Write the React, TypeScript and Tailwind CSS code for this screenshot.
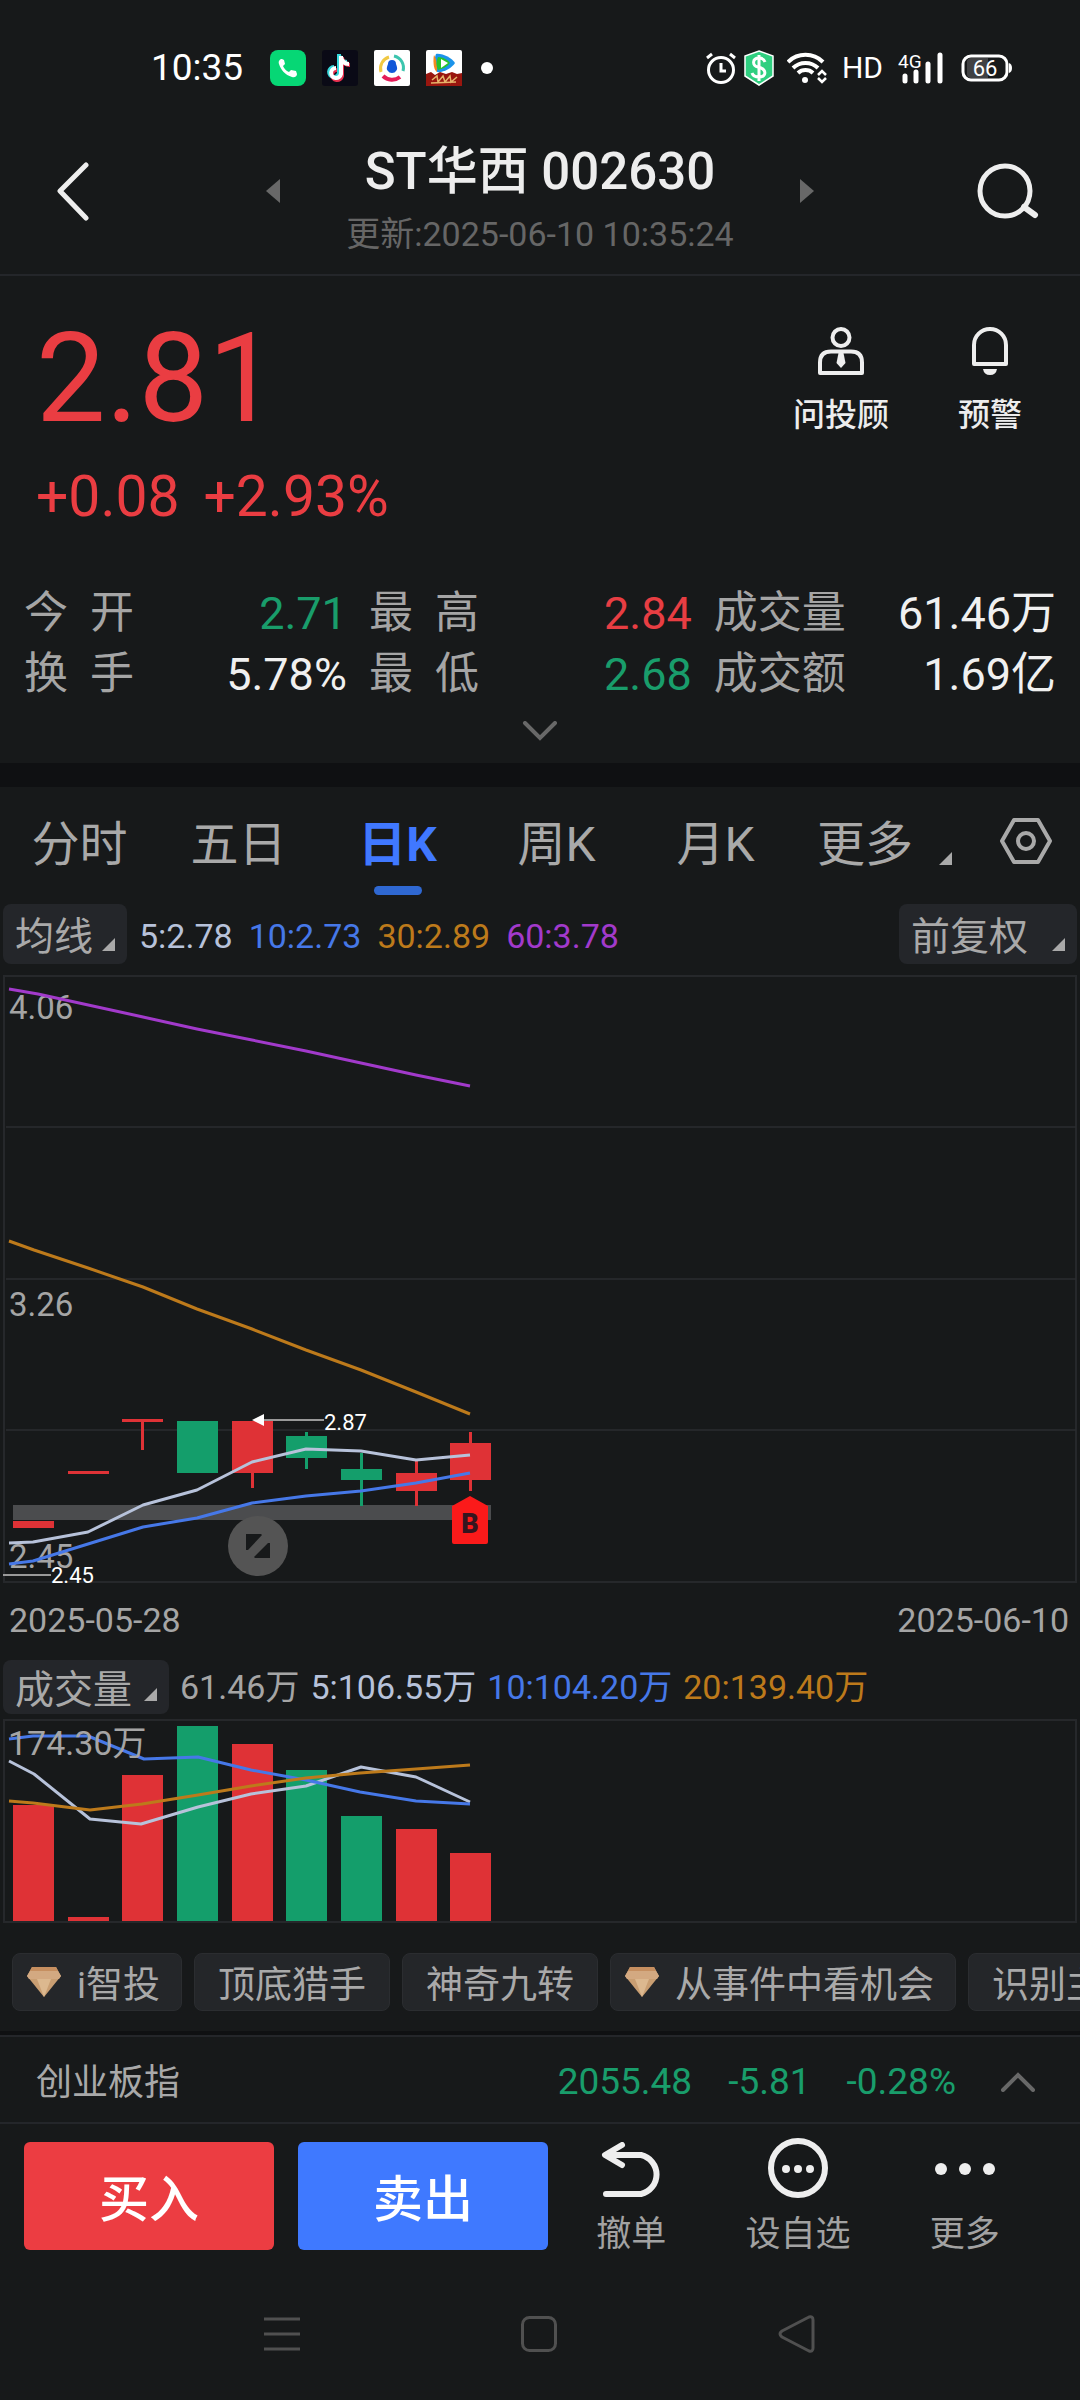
import { useState } from 'react';
import type { ReactNode } from 'react';

const UP = '#df3236';
const DOWN = '#149e6b';
const GRID = '#26282b';
const MA_WHITE = '#b7c2da';
const MA_BLUE = '#4678e8';
const MA_ORANGE = '#bd7a1b';
const MA_PURPLE = '#a23acb';

type Period = '分时' | '五日' | '日K' | '周K' | '月K';

const periods: Period[] = ['分时', '五日', '日K', '周K', '月K'];

const stats = [
  { label: '今开', value: '2.71', color: 'text-[#199d6b]' },
  { label: '最高', value: '2.84', color: 'text-[#e83e43]' },
  { label: '成交量', value: '61.46万', color: 'text-[#f0f0f0]' },
  { label: '换手', value: '5.78%', color: 'text-[#f0f0f0]' },
  { label: '最低', value: '2.68', color: 'text-[#199d6b]' },
  { label: '成交额', value: '1.69亿', color: 'text-[#f0f0f0]' },
];

const tools = [
  { label: 'i智投', vip: true },
  { label: '顶底猎手', vip: false },
  { label: '神奇九转', vip: false },
  { label: '从事件中看机会', vip: true },
  { label: '识别主力', vip: false },
];

// open/close edges and high/low of each day, in chart units
const candles = [
  { x: 33, top: 546, bottom: 553, high: 546, low: 553, up: true },
  { x: 88, top: 496, bottom: 499, high: 496, low: 499, up: true },
  { x: 142, top: 444, bottom: 447, high: 444, low: 475, up: true },
  { x: 197, top: 446, bottom: 498, high: 446, low: 498, up: false },
  { x: 252, top: 446, bottom: 498, high: 446, low: 513, up: true },
  { x: 306, top: 461, bottom: 483, high: 457, low: 494, up: false },
  { x: 361, top: 494, bottom: 505, high: 478, low: 531, up: false },
  { x: 416, top: 498, bottom: 516, high: 484, low: 531, up: true },
  { x: 470, top: 468, bottom: 505, high: 457, low: 516, up: true },
];

const volumes = [
  { x: 33, top: 86, up: true },
  { x: 88, top: 198, up: true },
  { x: 142, top: 56, up: true },
  { x: 197, top: 7, up: false },
  { x: 252, top: 25, up: true },
  { x: 306, top: 51, up: false },
  { x: 361, top: 97, up: false },
  { x: 416, top: 110, up: true },
  { x: 470, top: 134, up: true },
];

const priceLines = [
  { color: MA_PURPLE, points: '9,14 38,19 143,42 197,54 252,65 306,76 361,88 416,100 470,111' },
  { color: MA_ORANGE, points: '9,266 34,275 88,293 143,312 197,334 252,354 306,375 361,395 416,417 470,439' },
  { color: MA_WHITE, points: '9,568 33,567 88,557 143,530 197,515 252,487 306,474 361,476 416,485 470,480' },
  { color: MA_BLUE, points: '9,589 33,586 88,569 143,552 197,543 252,528 306,521 361,516 416,508 470,498' },
];

const volumeLines = [
  { color: MA_WHITE, points: '9,42 34,55 90,100 141,105 198,88 251,75 306,67 361,48 416,58 470,83' },
  { color: MA_BLUE, points: '9,20 33,17 88,17 144,40 198,38 251,51 306,61 360,73 416,82 470,85' },
  { color: MA_ORANGE, points: '9,82 33,84 90,91 142,85 198,76 251,67 306,59 360,54 416,50 470,46' },
];

function Corner() {
  return (
    <svg className="h-[13px] w-[13px] shrink-0" viewBox="0 0 13 13" aria-hidden="true">
      <path d="M13 0v13H0z" fill="#a9a9a9" />
    </svg>
  );
}

function Diamond() {
  return (
    <svg className="h-[30px] w-[34px] shrink-0" viewBox="0 0 34 30" aria-hidden="true">
      <path d="M5 0h24l5 9-17 21L0 9z" fill="#c99e72" />
      <path d="M5 0h24l2 4H3z" fill="#c68f60" />
      <path d="M3 4h28l3 5-2 3H2L0 9z" fill="#d3a981" />
      <path d="M10 12h14l-7 18z" fill="#dcb88f" />
    </svg>
  );
}

function StatusBar() {
  return (
    <div className="flex h-32 items-center justify-between pt-2 pr-[68px] pl-[151px] text-white">
      <div className="flex items-center gap-4">
        <span className="mr-[11px] text-[37px] leading-[40px]">10:35</span>
        <svg className="h-9 w-9" viewBox="0 0 36 36" aria-hidden="true">
          <rect width="36" height="36" rx="8" fill="#06d775" />
          <path d="M12 9c-2 0-4 2-3 5 2 6 6 11 13 13 3 1 5-1 5-3l-1-3-5-1-2 2c-3-1-5-4-6-6l2-2-1-4z" fill="#fff" />
        </svg>
        <svg className="h-9 w-9" viewBox="0 0 36 36" aria-hidden="true">
          <rect width="36" height="36" rx="3" fill="#0a0a16" />
          <path d="M18 5v19a5 5 0 1 1-5-6M18 6c1 5 4 7 8 7" transform="translate(-1 -1)" fill="none" stroke="#37d8dc" strokeWidth="4" />
          <path d="M18 5v19a5 5 0 1 1-5-6M18 6c1 5 4 7 8 7" transform="translate(2 2)" fill="none" stroke="#e8304f" strokeWidth="4" />
          <path d="M19 6v18a5 5 0 1 1-5-6M19 7c1 5 4 7 8 7" fill="none" stroke="#fff" strokeWidth="4" />
        </svg>
        <svg className="h-9 w-9" viewBox="0 0 36 36" aria-hidden="true">
          <rect width="36" height="36" rx="2" fill="#fff" />
          <path d="M7 22a12 12 0 0 1 8-15" fill="none" stroke="#f0c843" strokeWidth="3" />
          <path d="M20 6a12 12 0 0 1 9 15" fill="none" stroke="#3cc5ae" strokeWidth="3" />
          <path d="M9 26a13 13 0 0 0 17 1" fill="none" stroke="#e51b58" strokeWidth="4" />
          <path d="M14 14a4 4 0 0 1 8 0c1 3 2 5 0 7q-1 2-4 2t-4-2c-2-2-1-4 0-7z" fill="#1157d8" />
        </svg>
        <svg className="h-9 w-9" viewBox="0 0 36 36" aria-hidden="true">
          <rect width="36" height="36" rx="2" fill="#fff" />
          <path d="M10 4c6-1 16 4 19 9-3 5-12 10-18 9-3-5-3-13-1-18z" fill="#1b93ea" />
          <path d="M8 5c3 4 3 12 3 17-4-2-4-13-3-17z" fill="#f58a1f" />
          <path d="M12 7c5 0 10 3 12 6-3 4-8 6-12 7-2-4-2-9 0-13z" fill="#25c32c" />
          <path d="M15 9l7 4-7 5z" fill="#fff" />
          <path d="M0 24l5-2 4 3 5-3 6 2 6-2 5 2 5-1v13H0z" fill="#99160f" />
          <path d="M6 30l5-4 1 6 5-6 2 6 5-6 1 6 6-5M5 33l25-1" fill="none" stroke="#e6b36a" strokeWidth="1.5" />
        </svg>
        <span className="ml-[3px] h-3 w-3 rounded-full bg-white" />
      </div>
      <div className="flex items-center gap-[15px]">
        <svg className="-mr-[7px] h-8 w-[30px]" viewBox="0 0 30 32" fill="none" stroke="#fff" strokeWidth="3" aria-hidden="true">
          <circle cx="15" cy="18" r="12.500" />
          <path d="M15 11v8h5M1 6l5-4M29 6l-5-4" />
        </svg>
        <svg className="-mr-0.5 h-9 w-[30px]" viewBox="0 0 30 36" aria-hidden="true">
          <path d="M15 1l14 5v20l-14 9-14-9V6z" fill="#2fcf80" stroke="#fff" strokeWidth="1.500" />
          <path d="M21 12c-1-3-3-4-6-4-7 0-7 8-1 9 9 2 9 10 1 10-3 0-6-1-7-4M15 5v26" fill="none" stroke="#fff" strokeWidth="3" />
        </svg>
        <svg className="h-[32px] w-10" viewBox="0 0 40 32" fill="none" stroke="#fff" strokeWidth="4" aria-hidden="true">
          <path d="M1 10a25 25 0 0 1 35 0M6 16a18 18 0 0 1 25 0M11 21a11 11 0 0 1 15 0" />
          <circle cx="18" cy="28" r="3" fill="#fff" stroke="none" />
          <path d="M31 23l4-4 4 4M31 26l4 4 4-4" strokeWidth="2.500" />
        </svg>
        <span className="text-[30px] leading-[32px]">HD</span>
        <svg className="h-[32px] w-12" viewBox="0 0 48 32" role="img" aria-label="4G">
          <text x="0" y="16" fontSize="19" fill="#fff">4G</text>
          <path d="M7 24v5M18 20v9M30 12v17M42 3v26" stroke="#fff" strokeWidth="5" strokeLinecap="round" />
        </svg>
        <svg className="h-7 w-[51px]" viewBox="0 0 51 28" aria-label="66" role="img">
          <path d="M6 7a4 4 0 0 1 4-3h17v20H10a4 4 0 0 1-4-3z" fill="#404143" />
          <rect x="2" y="2" width="44" height="24" rx="8" fill="none" stroke="#fff" strokeWidth="3" />
          <path d="M48 9q3 1 3 5t-3 5z" fill="#fff" />
          <text x="24" y="22" fontSize="22" fill="#fff" textAnchor="middle">66</text>
        </svg>
      </div>
    </div>
  );
}

function Header() {
  return (
    <header className="flex items-center justify-between border-b-2 border-[#24262a] pr-10 pb-5 pl-14">
      <button type="button" aria-label="返回" className="w-12">
        <svg className="h-[60px] w-9" viewBox="0 0 36 60" fill="none" stroke="#eee" strokeWidth="5" strokeLinecap="round" strokeLinejoin="round">
          <path d="M30 4L4 30l26 27" />
        </svg>
      </button>
      <div className="flex items-center gap-[66px]">
        <button type="button" aria-label="上一只">
          <svg className="h-6 w-[14px]" viewBox="0 0 14 24"><path d="M14 0v24L0 12z" fill="#686868" /></svg>
        </button>
        <div className="pt-3.5 text-center">
          <h1 className="text-[51px] leading-[60px] font-medium text-[#ededed]">ST华西 002630</h1>
          <p className="mt-3 text-[34px] leading-[40px] text-[#666]">更新:2025-06-10 10:35:24</p>
        </div>
        <button type="button" aria-label="下一只">
          <svg className="h-6 w-[14px]" viewBox="0 0 14 24"><path d="M0 0v24l14-12z" fill="#686868" /></svg>
        </button>
      </div>
      <button type="button" aria-label="搜索">
        <svg className="h-[60px] w-16" viewBox="0 0 64 60" fill="none" stroke="#eee" strokeWidth="5" strokeLinecap="round">
          <circle cx="29" cy="30" r="25" />
          <path d="M48 46l11 8" strokeWidth="6" />
        </svg>
      </button>
    </header>
  );
}

function Quote() {
  return (
    <section className="pt-[41px] pb-[22px]">
      <div className="flex items-start justify-between pr-[58px] pl-9 text-[#ea3d42]">
        <div>
          <p className="text-[124px] leading-[124px]">2.81</p>
          <p className="mt-[26px] flex gap-6 text-[57px] leading-[60px]">
            <span>+0.08</span>
            <span>+2.93%</span>
          </p>
        </div>
        <div className="flex gap-[69px] pt-2.5 text-[32px] leading-[40px] font-medium text-[#ededed]">
          <button type="button" className="flex flex-col items-center gap-5">
            <svg className="h-12 w-[46px]" viewBox="0 0 46 48" fill="none" stroke="#eee" strokeWidth="4">
              <circle cx="23" cy="10.500" r="8.500" />
              <path d="M13 24.500h20q11 0 11 11V46H2V35.500q0-11 11-11z" strokeLinejoin="round" />
              <path d="M20.500 26h5l2 10-4.500 5-4.500-5z" fill="#eee" stroke="none" />
            </svg>
            问投顾
          </button>
          <button type="button" className="flex flex-col items-center gap-5">
            <svg className="h-12 w-9" viewBox="0 0 36 48" fill="none" stroke="#eee" strokeWidth="4">
              <path d="M2 37V18a16 16 0 0 1 32 0v19z" strokeLinejoin="round" />
              <path d="M11 42h14q-1 6-7 6t-7-6z" fill="#eee" stroke="none" />
            </svg>
            预警
          </button>
        </div>
      </div>
      <dl className="mt-14 grid grid-cols-[1fr_1fr_1.06fr] gap-x-[22px] px-6 text-[44px] leading-[61px]">
        {stats.map((s) => (
          <div key={s.label} className="flex justify-between">
            <dt className={`flex text-[#a5a5a5] ${s.label.length === 2 ? 'gap-[22px]' : ''}`}>
              {s.label.split('').map((ch) => (
                <span key={ch}>{ch}</span>
              ))}
            </dt>
            <dd className={`text-[45px] ${s.color}`}>{s.value}</dd>
          </div>
        ))}
      </dl>
      <button type="button" aria-label="展开" className="mx-auto mt-4 block">
        <svg className="h-5 w-9" viewBox="0 0 36 20" fill="none" stroke="#686868" strokeWidth="4" strokeLinecap="round">
          <path d="M3 2l15 15L33 2" />
        </svg>
      </button>
    </section>
  );
}

function PeriodTabs() {
  const [period, setPeriod] = useState<Period>('日K');

  return (
    <nav className="flex items-start pt-7 pr-7 text-[48px] leading-[60px] text-[#a9a9a9]">
      {periods.map((p) => (
        <button
          key={p}
          type="button"
          onClick={() => setPeriod(p)}
          className={`flex flex-1 flex-col items-center gap-[11px] pb-[9px] ${
            p === period ? 'font-bold text-[#4078ff]' : ''
          }`}
        >
          {p}
          <span className={`h-[9px] w-12 rounded-full ${p === period ? 'bg-[#2f68d2]' : ''}`} />
        </button>
      ))}
      <button type="button" className="mr-12 ml-[22px] flex items-end gap-[26px]">
        更多
        <span className="pb-2.5"><Corner /></span>
      </button>
      <button type="button" aria-label="设置" className="pt-0.5">
        <svg className="h-[48px] w-[52px]" viewBox="0 0 52 48" fill="none" stroke="#a9a9a9" strokeWidth="4" strokeLinejoin="round">
          <path d="M14 3h24l12 21-12 21H14L2 24z" />
          <circle cx="26" cy="24" r="8" />
        </svg>
      </button>
    </nav>
  );
}

function DropButton({ children, gap = 'gap-3' }: { children: ReactNode; gap?: string }) {
  return (
    <button
      type="button"
      className={`flex items-start rounded-lg bg-[#24262a] px-3 text-[39px] text-[#a9a9a9] ${gap}`}
    >
      <span className="pt-[3px]">{children}</span>
      <span className="flex self-end pb-[13px]"><Corner /></span>
    </button>
  );
}

function PriceChart() {
  return (
    <svg className="mt-[11px] block w-full" viewBox="0 0 1080 610" role="img" aria-label="日K线图">
      <rect x="4" y="1" width="1072" height="606" fill="none" stroke={GRID} strokeWidth="2" />
      <path d="M6 152h1070M6 304h1070M6 455h1070" stroke="#2b2d30" strokeWidth="1.500" />
      <rect x="13" y="530" width="478" height="15" fill="#4b4c4e" />
      {candles.map((c) => (
        <g key={c.x} fill={c.up ? UP : DOWN}>
          <rect x={c.x - 1} y={c.high} width="3" height={c.low - c.high} />
          <rect x={c.x - 20} y={c.top} width="41" height={c.bottom - c.top} />
        </g>
      ))}
      <g fontSize="33" fill="#a5a5a5">
        <text x="9" y="44">4.06</text>
        <text x="9" y="341">3.26</text>
        <text x="9" y="593">2.45</text>
      </g>
      {priceLines.map((l) => (
        <polyline key={l.color} points={l.points} fill="none" stroke={l.color} strokeWidth="3" strokeLinejoin="round" />
      ))}
      <path d="M264 445h60M3 600h48" stroke="#999" strokeWidth="2" />
      <path d="M252 445l12-6v12z" fill="#fff" />
      <g fontSize="22" fill="#fff">
        <text x="324" y="455">2.87</text>
        <text x="51" y="608">2.45</text>
      </g>
      <circle cx="258" cy="571" r="30" fill="#545454" />
      <path d="M246 559h15l1 1-14 15h-2zM270 583h-15l-1-1 14-14h2z" fill="#17191a" />
      <path d="M470 521l18 10v36q0 2-2 2h-32q-2 0-2-2v-36z" fill="#fb1a1a" />
      <text x="470" y="558" fontSize="27" fontWeight="900" fill="#35151f" textAnchor="middle">B</text>
    </svg>
  );
}

function VolumeChart() {
  return (
    <svg className="mt-[5px] block w-full" viewBox="0 0 1080 204" role="img" aria-label="成交量图">
      <rect x="4" y="1" width="1072" height="202" fill="none" stroke={GRID} strokeWidth="2" />
      {volumes.map((v) => (
        <rect key={v.x} x={v.x - 20} y={v.top} width="41" height={202 - v.top} fill={v.up ? UP : DOWN} />
      ))}
      {volumeLines.map((l) => (
        <polyline key={l.color} points={l.points} fill="none" stroke={l.color} strokeWidth="3" strokeLinejoin="round" />
      ))}
      <text x="8" y="36" fontSize="34" fill="#a5a5a5">174.30万</text>
    </svg>
  );
}

function TradeBar() {
  return (
    <div className="flex pt-[18px] pr-8 pl-6 text-[35px] leading-[30px] text-[#a2a2a2]">
      <button type="button" className="mr-6 h-[108px] flex-[3] rounded-md bg-[#ec3d42] pt-2 text-[50px] font-medium text-white">
        买入
      </button>
      <button type="button" className="h-[108px] flex-[3] rounded-md bg-[#3f79ff] pt-2 text-[50px] font-medium text-white">
        卖出
      </button>
      <button type="button" className="flex flex-[2] flex-col items-center justify-between">
        <svg className="h-[60px] w-[60px]" viewBox="0 0 60 60" fill="none" stroke="#eee" strokeWidth="6" strokeLinecap="round" strokeLinejoin="round">
          <path d="M21 3L4 13l17 10" />
          <path d="M6 13h34a20 20 0 0 1 0 39H5" />
        </svg>
        撤单
      </button>
      <button type="button" className="flex flex-[2] flex-col items-center justify-between">
        <svg className="-mt-1 h-[60px] w-[60px]" viewBox="0 0 60 60" fill="none" stroke="#eee" strokeWidth="6">
          <circle cx="30" cy="30" r="27" />
          <path d="M18 31h0M30 31h0M42 31h0" strokeWidth="8" strokeLinecap="round" />
        </svg>
        设自选
      </button>
      <button type="button" className="flex flex-[2] flex-col items-center justify-between">
        <svg className="h-[60px] w-[62px]" viewBox="0 0 62 60" fill="#eee">
          <circle cx="7" cy="27" r="6" />
          <circle cx="31" cy="27" r="6" />
          <circle cx="55" cy="27" r="6" />
        </svg>
        更多
      </button>
    </div>
  );
}

function SystemNav() {
  return (
    <div className="flex items-center justify-between px-[264px] pt-16 pb-[46px]">
      <button type="button" aria-label="最近任务">
        <svg className="h-10 w-9" viewBox="0 0 36 40" stroke="#505050" strokeWidth="3">
          <path d="M0 5h36M0 20h36M0 35h36" />
        </svg>
      </button>
      <button type="button" aria-label="主屏幕">
        <svg className="h-10 w-9" viewBox="0 0 36 40" fill="none" stroke="#505050" strokeWidth="3">
          <rect x="1.500" y="3.500" width="33" height="33" rx="7" />
        </svg>
      </button>
      <button type="button" aria-label="后退">
        <svg className="h-10 w-[38px]" viewBox="0 0 38 40" fill="none" stroke="#505050" strokeWidth="3" strokeLinejoin="round">
          <path d="M31 3L4 17q-4 3 0 6l27 14q4 1 4-3V6q0-4-4-3z" />
        </svg>
      </button>
    </div>
  );
}

export default function App() {
  return (
    <div className="min-h-screen overflow-hidden bg-[#17191a] font-['Roboto','Noto_Sans_CJK_SC',sans-serif]">
      <StatusBar />
      <Header />
      <Quote />
      <div className="h-6 bg-[#0f1012]" />

      <PeriodTabs />
      <div className="flex h-[60px] justify-between px-[3px] leading-[60px]">
        <div className="flex gap-4 text-[34px]">
          <DropButton gap="gap-[9px]">均线</DropButton>
          <span className="-ml-1 pt-0.5 text-[#b7c2da]">5:2.78</span>
          <span className="pt-0.5 text-[#4678e8]">10:2.73</span>
          <span className="pt-0.5 text-[#bd7a1b]">30:2.89</span>
          <span className="pt-0.5 text-[#a23acb]">60:3.78</span>
        </div>
        <DropButton gap="gap-6">前复权</DropButton>
      </div>
      <PriceChart />
      <div className="mt-[15px] flex justify-between pr-[11px] pl-[9px] text-[34px] leading-[40px] text-[#a5a5a5]">
        <span>2025-05-28</span>
        <span>2025-06-10</span>
      </div>

      <div className="mt-5 flex h-[54px] gap-[11px] px-[3px] text-[34px] leading-[54px]">
        <DropButton>成交量</DropButton>
        <span className="text-[#a5a5a5]">61.46万</span>
        <span className="text-[#b7c2da]">5:106.55万</span>
        <span className="text-[#4678e8]">10:104.20万</span>
        <span className="text-[#bd7a1b]">20:139.40万</span>
      </div>
      <VolumeChart />

      <div className="mt-[30px] flex gap-3 overflow-hidden pl-3 text-[37px] whitespace-nowrap text-[#a9a9a9]">
        {tools.map((t) => (
          <button
            key={t.label}
            type="button"
            className={`flex shrink-0 items-center gap-4 rounded-lg border border-[#2b2d30] bg-[#242629] ${
              t.vip ? 'pr-[21px] pl-3.5' : 'px-[23px]'
            }`}
          >
            {t.vip && <Diamond />}
            <span className="pt-2 leading-[48px]">{t.label}</span>
          </button>
        ))}
      </div>

      <div className="mt-5 h-1 bg-[#0f1012]" />
      <div className="flex items-center border-y-2 border-[#24262a] pt-1 pr-11 pl-9 text-[37px] leading-[81px] text-[#199d6b]">
        <span className="flex-1 pt-1 text-[36px] leading-[77px] text-[#a9a9a9]">创业板指</span>
        <span>2055.48</span>
        <span className="ml-9">-5.81</span>
        <span className="mr-11 ml-9">-0.28%</span>
        <button type="button" aria-label="展开指数">
          <svg className="h-5 w-9" viewBox="0 0 36 20" fill="none" stroke="#686868" strokeWidth="4" strokeLinecap="round">
            <path d="M3 18L18 3l15 15" />
          </svg>
        </button>
      </div>
      <TradeBar />
      <SystemNav />
    </div>
  );
}
